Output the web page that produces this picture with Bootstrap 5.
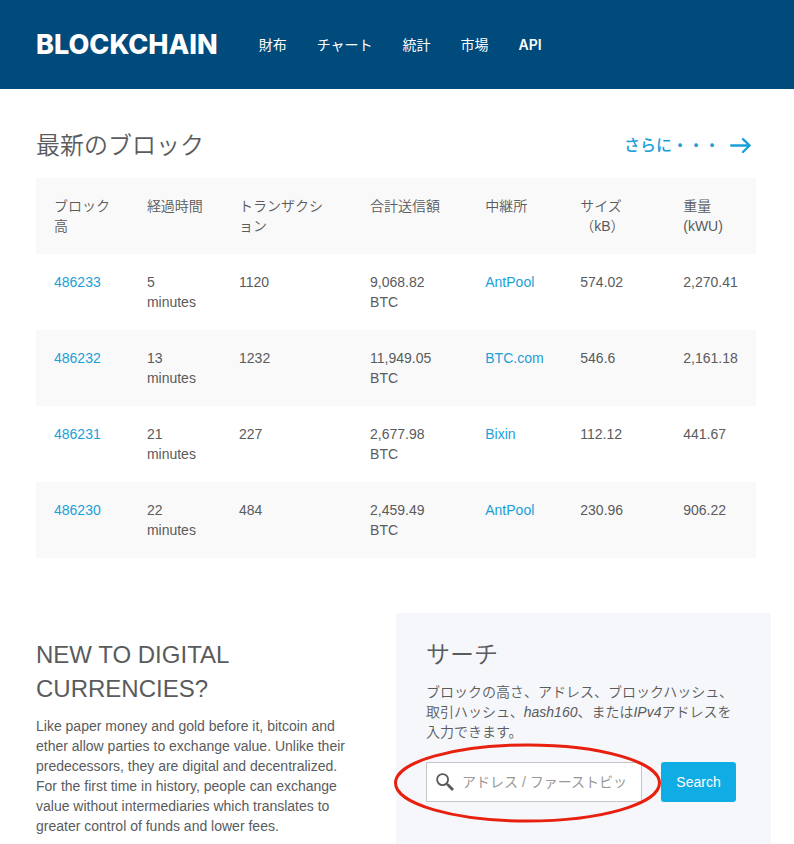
<!DOCTYPE html>
<html lang="ja">
<head>
<meta charset="utf-8">
<meta name="viewport" content="width=device-width, initial-scale=1">
<title>Blockchain</title>
<link href="https://cdn.jsdelivr.net/npm/bootstrap@5.3.0/dist/css/bootstrap.min.css" rel="stylesheet">
<style>
body { font-family: "Liberation Sans", "Noto Sans CJK JP", sans-serif; font-size: 14px; line-height: 20px; color: #5a5b5d; }
.page-pad { padding-left: 36px; padding-right: 38px; }
.site-nav { background: #004a7c; min-height: 89px; }
.site-nav .navbar-brand { font-family: Inter, sans-serif; font-weight: 800; font-size: 27px; line-height: 34px; margin-right: 41px; }
.site-nav .navbar-nav { gap: 30px; }
.site-nav .nav-link { font-family: Inter, "Noto Sans CJK JP", sans-serif; font-weight: 600; line-height: 22px; }
.site-nav .nav-link:lang(ja) { font-weight: 400; }
.latest { padding-top: 40px; }
h2 { font-size: 24px; line-height: 34px; font-weight: 400; margin: 0; }
h2:lang(ja) { font-weight: 350; }
a.blue { color: #1b9fd8; text-decoration: none; }
.latest-head { margin-bottom: 15px; }
.more { font-size: 16px; font-weight: 500; gap: 10px; padding-right: 5px; }
.blocks { table-layout: fixed; }
.blocks > :not(caption) > * > * { padding: 18px 17px 18px 18px; font-weight: 400; vertical-align: top; color: #5a5b5d; }
.blocks > thead > tr > th { background: #f9f9f9; font-weight: 350; }
.blocks > tbody > tr:nth-child(even) > td { background: #f9f9f9; }
.w-a { width: 12.9%; } .w-b { width: 12.8%; } .w-c { width: 18.2%; } .w-d { width: 16%; }
.w-e { width: 13.2%; } .w-f { width: 14.3%; } .w-g { width: 12.6%; }
.lower { padding-left: 21px; padding-right: 23px; padding-top: 55px; }
.intro { padding: 25px 45px 8px 15px; }
.finder { background: #f5f7fa; padding: 25px 30px 42px; }
.finder h2, .intro h2 { margin-bottom: 10px; }
.finder p { margin-bottom: 20px; font-weight: 350; }
.finder form { gap: 19px; }
.field { width: 216px; height: 40px; background: #fff; border: 1px solid #c3c5c9; padding: 0 14px 0 9px; gap: 8px; }
.field input { font-size: 14px; line-height: 24px; color: #5a5b5d; }
.field input::placeholder { color: #999; opacity: 1; }
.go { background: #10ade4; color: #fff; font-size: 14px; line-height: 20px; height: 40px; width: 75px; border-radius: 3px; padding: 0; border: 0; }
.ring { left: -33px; top: -20px; pointer-events: none; }
</style>
<script src="https://cdn.jsdelivr.net/npm/bootstrap@5.3.0/dist/js/bootstrap.bundle.min.js"></script>
</head>
<body>
<nav class="navbar navbar-expand navbar-dark site-nav page-pad py-0">
  <a class="navbar-brand text-white p-0" href="#">BLOCKCHAIN</a>
  <ul class="navbar-nav">
    <li class="nav-item"><a class="nav-link text-white p-0" href="#">財布</a></li>
    <li class="nav-item"><a class="nav-link text-white p-0" href="#">チャート</a></li>
    <li class="nav-item"><a class="nav-link text-white p-0" href="#">統計</a></li>
    <li class="nav-item"><a class="nav-link text-white p-0" href="#">市場</a></li>
    <li class="nav-item"><a class="nav-link text-white p-0" lang="en" href="#">API</a></li>
  </ul>
</nav>
<main>
  <section class="latest page-pad">
    <div class="latest-head d-flex justify-content-between align-items-center">
      <h2>最新のブロック</h2>
      <a class="blue more d-flex align-items-center" href="#">さらに・・・
        <svg width="21" height="16" viewBox="0 0 21 16" fill="none" stroke="currentColor" stroke-width="2.4" stroke-linecap="round" stroke-linejoin="round" aria-hidden="true"><path d="M1.2 7.5H19.6M13 1.2L19.6 7.5L13 14"/></svg>
      </a>
    </div>
    <table class="table table-borderless blocks mb-0">
      <colgroup><col class="w-a"><col class="w-b"><col class="w-c"><col class="w-d"><col class="w-e"><col class="w-f"><col class="w-g"></colgroup>
      <thead><tr><th scope="col">ブロック高</th><th scope="col">経過時間</th><th scope="col">トランザクション</th><th scope="col">合計送信額</th><th scope="col">中継所</th><th scope="col">サイズ（kB）</th><th scope="col">重量 (kWU)</th></tr></thead>
      <tbody>
        <tr><td><a class="blue" href="#">486233</a></td><td>5 minutes</td><td>1120</td><td>9,068.82 BTC</td><td><a class="blue" href="#">AntPool</a></td><td>574.02</td><td>2,270.41</td></tr>
        <tr><td><a class="blue" href="#">486232</a></td><td>13 minutes</td><td>1232</td><td>11,949.05 BTC</td><td><a class="blue" href="#">BTC.com</a></td><td>546.6</td><td>2,161.18</td></tr>
        <tr><td><a class="blue" href="#">486231</a></td><td>21 minutes</td><td>227</td><td>2,677.98 BTC</td><td><a class="blue" href="#">Bixin</a></td><td>112.12</td><td>441.67</td></tr>
        <tr><td><a class="blue" href="#">486230</a></td><td>22 minutes</td><td>484</td><td>2,459.49 BTC</td><td><a class="blue" href="#">AntPool</a></td><td>230.96</td><td>906.22</td></tr>
      </tbody>
    </table>
  </section>
  <div class="lower">
    <div class="row g-0">
      <section class="col-6 intro" lang="en">
        <h2>NEW TO DIGITAL CURRENCIES?</h2>
        <p class="mb-0">Like paper money and gold before it, bitcoin and ether allow parties to exchange value. Unlike their predecessors, they are digital and decentralized. For the first time in history, people can exchange value without intermediaries which translates to greater control of funds and lower fees.</p>
      </section>
      <section class="col-6 finder">
        <h2><label for="q">サーチ</label></h2>
        <p>ブロックの高さ、アドレス、ブロックハッシュ、取引ハッシュ、<em>hash160</em>、または<em>IPv4</em>アドレスを入力できます。</p>
        <form class="d-flex position-relative">
          <div class="field d-flex align-items-center">
            <svg class="flex-shrink-0" width="18" height="18" viewBox="0 0 18 18" fill="none" stroke="#58595b" aria-hidden="true"><circle cx="6.6" cy="6.6" r="5.5" stroke-width="1.8"/><path d="M10.6 10.6L11.8 11.8" stroke-width="1.8"/><path d="M11.6 11.6L17 17" stroke-width="2.8"/></svg>
            <input id="q" class="form-control border-0 p-0 rounded-0 bg-transparent shadow-none" type="text" placeholder="アドレス / ファーストビット">
          </div>
          <button class="btn go" type="submit">Search</button>
          <svg class="ring position-absolute" width="270" height="82" viewBox="0 0 270 82" fill="none" stroke="#e8200f" stroke-width="3" aria-hidden="true"><ellipse cx="134.5" cy="41" rx="132" ry="38"/></svg>
        </form>
      </section>
    </div>
  </div>
</main>
</body>
</html>
